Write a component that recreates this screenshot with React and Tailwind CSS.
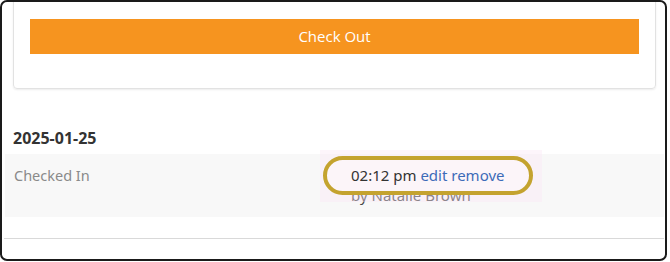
export default function App() {
    return (
        <div className="w-[670px] h-[262px] bg-white" style={{ fontFamily: '"Open Sans", "Liberation Sans", sans-serif' }}>
            <div className="relative w-[667px] h-[261px] border-2 border-[#1a1a1a] rounded-[7px] overflow-hidden">
                <div className="ml-[11px] w-[643px] h-[90px] -mt-[3px] border border-[#e2e2e2] rounded-b-[4px] shadow-[0_1px_2px_rgba(0,0,0,0.08)] pt-[19px] px-[16px]">
                    <button className="w-full h-[35px] bg-[#f6941f] text-white text-[15px] font-normal">Check Out</button>
                </div>

                <div className="pl-[11px] pt-[39px] pb-[6px] text-[16px] leading-[20px] font-bold text-[#333]" style={{ fontFamily: '"Noto Sans", sans-serif' }}>
                    2025-01-25
                </div>

                <div className="relative ml-[3px] mr-[1px] h-[63px] bg-[#f8f8f8] flex pt-[11px] text-[15px]" style={{ fontFamily: '"Noto Sans", sans-serif' }}>
                    <div className="w-[346px] pl-[9px] text-[14.5px] text-[#8a8a8a]">Checked In</div>
                    <div className="flex flex-col leading-[20px]">
                        <div className="relative z-10 text-[#333]">
                            02:12 pm <span className="text-[#3d6bb8]">edit remove</span>
                        </div>
                        <div className="text-[#444]">by Natalie Brown</div>
                    </div>
                    <div className="absolute left-[315px] -top-[4px] w-[222px] h-[52px] bg-[#fbe6f5] opacity-40" />
                    <div className="absolute left-[318px] top-[2px] w-[210px] h-[39px] rounded-full border-[4px] border-[#c4a32f] bg-[#fcf5f9]" />
                </div>

                <div className="mt-[21px] ml-[2px] mr-[1px] h-px bg-[#d9d9d9]" />
            </div>
        </div>
    );
}
